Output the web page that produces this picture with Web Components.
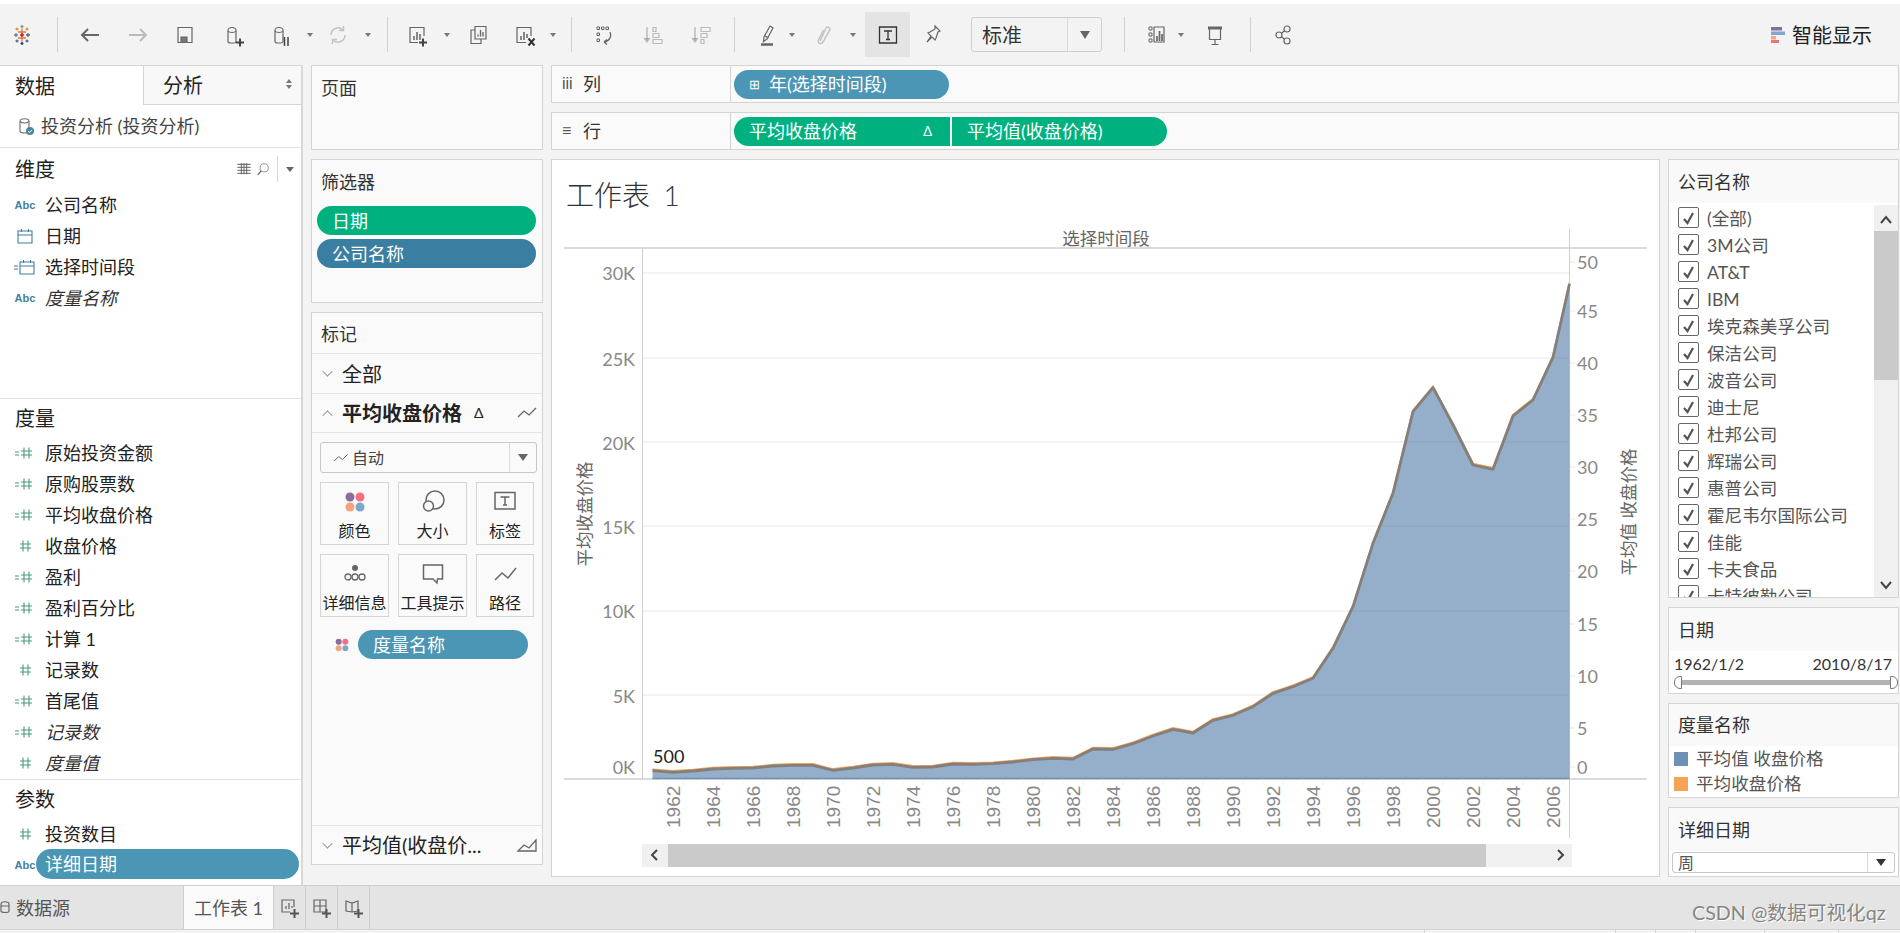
<!DOCTYPE html>
<html lang="zh">
<head>
<meta charset="utf-8">
<title>工作表 1</title>
<style>
html,body{margin:0;padding:0;height:933px;overflow:hidden;background:#f3f3f3;}
body{font-family:Lato,"Noto Sans CJK SC",sans-serif;color:#222;}
</style>
</head>
<body>
<tb-app>
  <tb-toolbar slot="top"></tb-toolbar>

  <tb-data-pane slot="data"></tb-data-pane>

  <div slot="mid" style="display:flex;flex-direction:column;gap:9px;height:800px">
    <tb-panel heading="页面" style="height:85px"></tb-panel>
    <tb-panel heading="筛选器" style="height:144px">
      <div style="display:flex;flex-direction:column;gap:4px;padding:13px 6px 0 5px">
        <tb-pill kind="green">日期</tb-pill>
        <tb-pill kind="dark">公司名称</tb-pill>
      </div>
    </tb-panel>
    <tb-marks></tb-marks>
  </div>

  <div slot="shelves" style="display:flex;flex-direction:column;gap:9px">
    <tb-shelf label="列" glyph="iii">
      <tb-pill kind="blue" style="width:215px"><span style="font-size:13px;margin-right:9px">⊞</span>年(选择时间段)</tb-pill>
    </tb-shelf>
    <tb-shelf label="行" glyph="≡">
      <tb-pill kind="green" shape="left" style="width:216px">平均收盘价格<span style="margin-left:auto;margin-right:18px;font-size:13px">Δ</span></tb-pill>
      <tb-pill kind="green" shape="right" style="width:215px;margin-left:2px">平均值(收盘价格)</tb-pill>
    </tb-shelf>
  </div>

  <tb-chart slot="center"></tb-chart>

  <div slot="right" style="display:flex;flex-direction:column;gap:9px">
    <tb-side heading="公司名称" style="height:439px">
      <tb-checklist>
        <tb-check>(全部)</tb-check><tb-check>3M公司</tb-check><tb-check>AT&amp;T</tb-check><tb-check>IBM</tb-check>
        <tb-check>埃克森美孚公司</tb-check><tb-check>保洁公司</tb-check><tb-check>波音公司</tb-check><tb-check>迪士尼</tb-check>
        <tb-check>杜邦公司</tb-check><tb-check>辉瑞公司</tb-check><tb-check>惠普公司</tb-check><tb-check>霍尼韦尔国际公司</tb-check>
        <tb-check>佳能</tb-check><tb-check>卡夫食品</tb-check><tb-check>卡特彼勒公司</tb-check>
      </tb-checklist>
    </tb-side>
    <tb-side heading="日期" style="height:87px"><tb-range from="1962/1/2" to="2010/8/17"></tb-range></tb-side>
    <tb-side heading="度量名称" style="height:95px;--head:42px">
      <tb-legend color="#6f90b5">平均值 收盘价格</tb-legend>
      <tb-legend color="#f5a356">平均收盘价格</tb-legend>
    </tb-side>
    <tb-side heading="详细日期" style="height:70px"><tb-select>周</tb-select></tb-side>
  </div>

  <tb-tabs slot="bottom"></tb-tabs>
</tb-app>

<script>
// icons are drawn on a 24x24 box, one unit is one pixel
const cyl = '<path d="M6 7.5c0-4 8-4 8 0v11c0 1-1 1.5-2 1.5H9c-2 0-3-.5-3-1.5z"/><path d="M6 8c1.500 2 6.500 2 8 0"/>';
const bars = '<path d="M9 17v-4M12 17V9M15 17v-6" stroke-width="1.5"/>';
const plus = '<path d="M14 19.500h8M18 15.500v8" stroke="#444" stroke-width="2"/>';
const icons = {
  logo: '<g stroke-width="1.300"><path d="M12 6v12M8 9h8M8 15h8" stroke="#e8762c"/><path d="M12 10v4M10 12h4" stroke="#c72037"/><path d="M6 10v4M4 12h4" stroke="#59879b"/><path d="M18 10v4M16 12h4" stroke="#5b6591"/><path d="M12 2v3.500M10.500 3.500h3" stroke="#7099a6"/><path d="M12 18.500v3.500M10.500 20.500h3" stroke="#1f457e"/><path d="M7 4.500v3M5.500 6h3M17 4.500v3M15.500 6h3" stroke="#eb912b"/><path d="M7 16.500v3M5.500 18h3M17 16.500v3M15.500 18h3" stroke="#5c6692"/></g>',
  back: '<path d="M21 12H4M10 6l-6 6 6 6" stroke-width="2"/>',
  forward: '<path d="M3 12h17M14 6l6 6-6 6" stroke="#bbb" stroke-width="2"/>',
  save: '<path d="M5 4.500h14v15H5z"/><path d="M8 19v-5h6v5" fill="#777"/>',
  newds: cyl + plus,
  pause: cyl + '<path d="M15.500 14v9M19 14v9" stroke="#444" stroke-width="1.500"/>',
  refresh: '<g stroke="#c4c4c4" stroke-width="1.500"><path d="M5 12a7 7 0 0 1 12-5"/><path d="M19 12a7 7 0 0 1-12 5"/><path d="M17.500 3v4.500H13M6.500 21v-4.500H11"/></g>',
  newsheet: '<path d="M19 13V4.500H5v15h8"/>' + bars + plus,
  dup: '<path d="M9 16V3.500h11V16z"/><path d="M9 7H5v13.500h10V16"/><path d="M12 13.500v-2M14.500 13.500V7M17 13.500V9" stroke-width="1.300"/>',
  clear: '<path d="M18 13V4.500H4v15h9"/><path d="M8 17v-4M11 17V9M14 15v-4" stroke-width="1.500"/><path d="M15.500 15.500l6 7M21.500 15.500l-6 7" stroke="#333" stroke-width="2"/>',
  swap: '<path d="M5 4h2.500v2.500H5zM9.500 4H12v2.500H9.500zM14 4h2.500v2.500H14zM5 10h2.500v2.500H5zM5 16h2.500v2.500H5z" stroke-width="1"/><path d="M18 9c2 4 0 9-6 10M12 19l3-2.500M12 19l3 2.500" stroke-width="1.300"/>',
  sort1: '<g stroke="#bbb"><path d="M7 4v14" stroke-width="1.500"/><path d="M4 15l3 4 3-4" fill="#aaa"/><path d="M13 4.500h3v4h-3zM13 10.500h6v4h-6zM13 16.500h9v4h-9z"/></g>',
  sort2: '<g stroke="#bbb"><path d="M7 4v14" stroke-width="1.500"/><path d="M4 15l3 4 3-4" fill="#aaa"/><path d="M13 4.500h9v4h-9zM13 10.500h6v4h-6zM13 16.500h3v4h-3z"/></g>',
  pen: '<path d="M15 3l3 2-6 11-3.500 2.500L9 14z"/><path d="M10 13l3.500 2M6 21.500h12" /><path d="M6 21.500h12" stroke="#666" stroke-width="2.500"/>',
  clip: '<path stroke="#c4c4c4" stroke-width="1.500" d="M9 18l6-13c1.500-2.500 5 0 3.500 2.500L12 19c-2 3-6 1-4.500-2l5-10"/>',
  text: '<path d="M3.500 4h17v16h-17z" stroke="#333" stroke-width="1.300"/><path d="M8 8h8M12 8v8M10 16.500h4" stroke="#333" stroke-width="1.300"/>',
  pin: '<path d="M14 3l5 5-2 1-2 6-1 2-3-3-5 5 4-6-3-3 2-1 5-3z"/>',
  showme: '<path d="M5 4h3v3H5zM5 10h3v3H5zM5 16h3v3H5z" stroke-width="1"/><path d="M10 4h10v15H10z"/><path d="M13 18v-5M15.500 18V8M18 18v-7" stroke-width="1.700"/>',
  present: '<path d="M5 5h14" stroke-width="3"/><path d="M6.500 6v10.500h11V6M12 16.500v5M8.500 21.500h7"/>',
  share: '<circle cx="8" cy="12" r="3"/><circle cx="16" cy="6" r="3"/><circle cx="16" cy="18" r="3"/><path d="M10.500 10.300l3-2.500M10.500 13.700l3 2.500"/>',
  cyl: '<path d="M7 7c0-3 9-3 9 0v10c0 2-2 2-4 2-3 0-5 0-5-2z" stroke="#777"/><path d="M7 7.500c2 2 7 2 9 0" stroke="#777"/><circle cx="17" cy="17" r="4" fill="#4a88a8" stroke="none"/><path d="M15 17l1.500 1.500 2.500-2.500" stroke="#fff" stroke-width="1"/>',
  line: '<path d="M3 16l6-6 5 4 7-7" stroke-width="1.300"/>',
  area: '<path d="M3 18l6-6 5 3 7-8v11H3z" stroke-width="1.300"/>',
  grid: '<path d="M2 5h20M2 9.500h20M2 14h20M2 18.500h20M8 3v17M12 3v17M16 3v17" stroke-width="1.500"/>',
  search: '<circle cx="14" cy="10" r="7"/><path d="M9 15L3 22" stroke-width="2"/>',
  color: '<circle cx="7" cy="7" r="4.500" fill="#8a6d9e" stroke="none"/><circle cx="17" cy="7" r="4.500" fill="#f76f7f" stroke="none"/><circle cx="7" cy="17" r="4.500" fill="#f3a581" stroke="none"/><circle cx="17" cy="17" r="4.500" fill="#7ea6cf" stroke="none"/>',
  size: '<circle cx="14" cy="10" r="9" stroke-width="1.500"/><circle cx="7.500" cy="16" r="5" fill="#fafafa" stroke-width="1.500"/>',
  label: '<path d="M2 2.500h20v16.500H2z" stroke-width="1.500"/><path d="M7.500 7h9M12 7v8M10 15h4" stroke-width="1.500"/>',
  detail: '<circle cx="12" cy="6" r="3" fill="#666" stroke="none"/><circle cx="5" cy="15" r="3" stroke-width="1.300"/><circle cx="12" cy="15" r="3" stroke-width="1.300"/><circle cx="19" cy="15" r="3" stroke-width="1.300"/>',
  tip: '<path d="M2.500 3h19v14h-5l-.5 4-4-4H2.500z" stroke-width="1.500"/>',
  path: '<path d="M2 18l7-7 6 5 8-10" stroke-width="1.500"/>',
  date: '<path d="M5 7h14v12H5zM5 11h14M8.500 5v3M15.500 5v3" stroke="#3f7f9f" stroke-width="1.100"/>',
  cdate: '<path d="M7 7h14v12H7zM7 11h14M10.500 5v3M17.500 5v3M1 11h4M1 14h4" stroke="#3f7f9f" stroke-width="1.100"/>',
  num: '<path d="M10 6.500v11M15 6.500v11M7 10h11M7 14h11" stroke="#4a9a7c" stroke-width="1.100"/>',
  cnum: '<path d="M8 6.500v11M13 6.500v11M5 10h11M5 14h11M-1 11h4M-1 14h4" stroke="#4a9a7c" stroke-width="1.100" transform="translate(3 0)"/>',
  sheetadd: '<path d="M16 11V4H4v12h8"/><path d="M8 13v-3M11 13V7M14 12v-2" stroke-width="1.200"/><path d="M12 17.500h9M16.500 13v9" stroke="#555" stroke-width="2"/>',
  dashadd: '<path d="M4 4h12v12H4zM4 10h12M10 4v12"/><path d="M12 17.500h9M16.500 13v9" stroke="#555" stroke-width="2"/>',
  storyadd: '<path d="M4 5l6 2 6-2v10l-6 1-6-1zM10 7v9"/><path d="M12 17.500h9M16.500 13v9" stroke="#555" stroke-width="2"/>',
  dsdb: '<path d="M0 9c0-3 8-3 8 0v7c0 2-8 2-8 0zM0 11h8" stroke="#666"/>'
};

// tiny helper: one class per element, markup in an open shadow root
function element(tag, css, render) {
  customElements.define(tag, class extends HTMLElement {
    constructor() {
      super();
      this.attachShadow({mode: 'open'});
    }
    connectedCallback() {
      this.shadowRoot.innerHTML = '<style>' + css + '</style>' + render(this);
    }
  });
}

element('tb-icon', ':host{display:inline-flex;width:24px;height:24px;flex:none}svg{display:block;overflow:visible}', el => {
  const s = el.getAttribute('size') || 24;
  return `<svg width="${s}" height="${s}" viewBox="0 0 24 24" fill="none" stroke="#666" stroke-width="1.200">${icons[el.getAttribute('name')]}</svg>`;
});

element('tb-app', `
  :host{display:block;width:1900px;height:933px;}
  .strip{height:4px;background:#fff}
  .main{display:grid;grid-template-columns:303px 232px 1109px 231px;grid-template-rows:85px 1fr;gap:9px 8px;height:820px}
  .data{grid-row:1/3;grid-column:1}
  .mid{grid-row:1/3;grid-column:2}
  .shelves{grid-row:1;grid-column:3/5}
  .center{grid-row:2;grid-column:3}
  .right{grid-row:2;grid-column:4}
`, () => `
  <div class="strip"></div>
  <slot name="top"></slot>
  <div class="main">
    <div class="data"><slot name="data"></slot></div>
    <div class="mid"><slot name="mid"></slot></div>
    <div class="shelves"><slot name="shelves"></slot></div>
    <div class="center"><slot name="center"></slot></div>
    <div class="right"><slot name="right"></slot></div>
  </div>
  <slot name="bottom"></slot>
`);

// [center x, icon] ; arrow = small caret, sep = divider line
const tools = [[22,'logo'],[57.500,'sep'],[90,'back'],[138,'forward'],[185,'save'],[234,'newds'],[281,'pause'],[310,'arrow'],[338,'refresh'],[368,'arrow'],
  [387,'sep'],[417,'newsheet'],[447,'arrow'],[478,'dup'],[525,'clear'],[553,'arrow'],[571,'sep'],[604,'swap'],[652,'sort1'],[700,'sort2'],[734,'sep'],
  [767,'pen'],[792,'arrow'],[823,'clip'],[853,'arrow'],[887.500,'text'],[933,'pin']];
const tools2 = [[1124,'sep'],[1156,'showme'],[1181,'arrow'],[1215,'present'],[1250,'sep'],[1283,'share']];

function toolRow(list, start) {
  let x = start, out = '';
  for (const [c, n] of list) {
    const w = n == 'sep' ? 1 : n == 'arrow' ? 6 : n == 'text' ? 45 : 24;
    const m = c - w / 2 - x;
    x = c + w / 2;
    if (n == 'sep') out += `<i class="sep" style="margin-left:${m}px"></i>`;
    else if (n == 'arrow') out += `<i class="arrow" style="margin-left:${m}px"></i>`;
    else if (n == 'text') out += `<span class="active" style="margin-left:${m}px"><tb-icon name="text"></tb-icon></span>`;
    else out += `<tb-icon name="${n}" style="margin-left:${m}px"></tb-icon>`;
  }
  return out;
}

element('tb-toolbar', `
  :host{display:flex;align-items:center;height:61px;background:#f3f3f3;position:relative}
  .sep{width:1px;height:35px;background:#d2d2d2;flex:none}
  .arrow{width:0;height:0;border:3px solid transparent;border-top:4px solid #777;border-bottom:0;flex:none}
  .active{width:45px;height:45px;background:#e4e4e4;display:flex;align-items:center;justify-content:center;flex:none}
  .select{margin-left:26px;width:129px;height:33px;border:1px solid #cfcfcf;border-radius:3px;display:flex;align-items:center;flex:none;box-sizing:content-box}
  .select b{font-weight:400;font-size:20px;line-height:24px;flex:1;padding-left:10px;color:#333}
  .select i{width:33px;height:33px;border-left:1px solid #d8d8d8;display:flex;align-items:center;justify-content:center}
  .select i::after{content:"";border:5px solid transparent;border-top:8px solid #666;border-bottom:0}
  .smart{margin-left:auto;margin-right:28px;display:flex;align-items:center;gap:7px;font-size:20px;line-height:24px;color:#222}
  .smart svg{display:block}
`, () => `
  ${toolRow(tools, 0)}
  <div class="select"><b>标准</b><i></i></div>
  ${toolRow(tools2, 1102)}
  <div class="smart">
    <svg width="14" height="16"><rect x="0" y="0" width="11" height="3.500" fill="#8a6d9e"/><rect x="0" y="4.500" width="14" height="3.500" fill="#7ea6cf"/><rect x="0" y="9" width="5" height="3.500" fill="#f3a581"/><rect x="0" y="13" width="8" height="3.500" fill="#f76f7f"/></svg>
    <span>智能显示</span>
  </div>
`);

element('tb-field', `
  :host{display:flex;align-items:center;height:var(--row,30.800px);padding-left:13px;font-size:18px;line-height:24px;color:#222;box-sizing:border-box}
  :host([italic]) span.t{font-style:italic;color:#333}
  .ic{width:24px;height:24px;margin-right:8px;display:flex;align-items:center;justify-content:center;flex:none}
  .abc{font:700 11px "Liberation Sans",sans-serif;color:#3f7f9f}
`, el => {
  const t = el.getAttribute('type');
  const ic = t == 'abc' ? '<span class="abc">Abc</span>' : `<tb-icon name="${t}"></tb-icon>`;
  return `<span class="ic">${ic}</span><span class="t"><slot></slot></span>`;
});

element('tb-data-pane', `
  :host{display:flex;flex-direction:column;background:#fff;border-top:1px solid #d4d4d4;border-right:2px solid #d8d8d8;height:820px;box-sizing:border-box;font-size:20px;--row:31.100px}
  .tabs{display:flex;height:39px;flex:none}
  .tabs div{display:flex;align-items:center;font-size:20px;line-height:24px;color:#222}
  .t1{width:143px;padding-left:15px;box-sizing:border-box}
  .t2{flex:1;padding-left:19px;background:#f8f8f8;border-left:1px solid #d4d4d4;border-bottom:1px solid #d4d4d4;position:relative}
  .t2::before,.t2::after{content:"";position:absolute;right:9px;border:3px solid transparent}
  .t2::before{top:13px;border-bottom:4px solid #777;border-top:0}
  .t2::after{top:19px;border-top:4px solid #777;border-bottom:0}
  .src{height:43px;flex:none;display:flex;align-items:center;padding-left:13px;gap:4px;font-size:18px;line-height:22px;color:#444;border-bottom:1px solid #e2e2e2;box-sizing:border-box}
  .head{height:42px;flex:none;display:flex;align-items:center;padding-left:15px;font-size:20px;line-height:24px;box-sizing:border-box}
  .tools{margin-left:auto;display:flex;align-items:center;padding-right:7px}
  .tools tb-icon{width:16px;height:16px;margin-right:4px}
  .tools tb-icon+tb-icon{width:14px;height:14px;margin-right:7px}
  .tools i{width:1px;height:26px;background:#d8d8d8;margin-right:8px}
  .tools b{border:4px solid transparent;border-top:5px solid #666;border-bottom:0}
  .sec{display:flex;flex-direction:column}
  .dims{height:251px;border-bottom:1px solid #e2e2e2;box-sizing:border-box;--row:30.800px}
  .meas{height:381px;border-bottom:1px solid #e2e2e2;box-sizing:border-box}
  .h2{height:38px}
  .pill{position:relative}
  .pill tb-pill{position:absolute;left:36px;top:0;width:263px;height:30px;padding-left:9px}
`, () => `
  <div class="tabs"><div class="t1">数据</div><div class="t2">分析</div></div>
  <div class="src"><tb-icon name="cyl"></tb-icon><span>投资分析 (投资分析)</span></div>
  <div class="sec dims">
    <div class="head">维度<span class="tools"><tb-icon name="grid" size="16"></tb-icon><tb-icon name="search" size="14"></tb-icon><i></i><b></b></span></div>
    <tb-field type="abc">公司名称</tb-field>
    <tb-field type="date">日期</tb-field>
    <tb-field type="cdate">选择时间段</tb-field>
    <tb-field type="abc" italic>度量名称</tb-field>
  </div>
  <div class="sec meas">
    <div class="head h2">度量</div>
    <tb-field type="cnum">原始投资金额</tb-field>
    <tb-field type="cnum">原购股票数</tb-field>
    <tb-field type="cnum">平均收盘价格</tb-field>
    <tb-field type="num">收盘价格</tb-field>
    <tb-field type="cnum">盈利</tb-field>
    <tb-field type="cnum">盈利百分比</tb-field>
    <tb-field type="cnum">计算 1</tb-field>
    <tb-field type="num">记录数</tb-field>
    <tb-field type="cnum">首尾值</tb-field>
    <tb-field type="cnum" italic>记录数</tb-field>
    <tb-field type="num" italic>度量值</tb-field>
  </div>
  <div class="sec">
    <div class="head h2">参数</div>
    <tb-field type="num">投资数目</tb-field>
    <div class="pill"><tb-field type="abc"></tb-field><tb-pill kind="blue">详细日期</tb-pill></div>
  </div>
`);

element('tb-panel', `
  :host{display:block;background:#fafafa;border:1px solid #d4d4d4;box-sizing:border-box}
  h3{margin:0;font-weight:400;font-size:18px;line-height:24px;color:#333;padding:10px 9px 0;height:33px;box-sizing:border-box}
`, el => `<h3>${el.getAttribute('heading')}</h3><slot></slot>`);

element('tb-pill', `
  :host{display:flex;align-items:center;height:29px;border-radius:15px;color:#fff;font-size:18px;line-height:22px;padding-left:15px;box-sizing:border-box;flex:none;background:#4b96b4}
  :host([kind=green]){background:#00b180}
  :host([kind=dark]){background:#3a7ea1}
  :host([shape=left]){border-radius:15px 0 0 15px}
  :host([shape=right]){border-radius:0 15px 15px 0}
`, () => '<slot></slot>');

element('tb-shelf', `
  :host{display:flex;height:38px;background:#fafafa;border:1px solid #d4d4d4;box-sizing:border-box}
  .lab{width:179px;flex:none;border-right:1px solid #d4d4d4;display:flex;align-items:center;padding-left:10px;box-sizing:border-box;font-size:18px;line-height:24px;color:#333}
  .g{width:21px;font-size:16px;color:#555;font-family:"Liberation Sans",sans-serif}
  .pills{display:flex;align-items:center;padding-left:3px}
`, el => `
  <div class="lab"><span class="g">${el.getAttribute('glyph')}</span>${el.getAttribute('label')}</div>
  <div class="pills"><slot></slot></div>
`);

function card(name, text) {
  return `<div class="card"><tb-icon name="${name}"></tb-icon><span>${text}</span></div>`;
}

element('tb-marks', `
  :host{display:flex;flex-direction:column;height:553px;background:#fafafa;border:1px solid #d4d4d4;box-sizing:border-box}
  h3{margin:0;font-weight:400;font-size:18px;line-height:24px;color:#333;padding:9px 9px 0;height:41px;box-sizing:border-box;border-bottom:1px solid #e4e4e4;flex:none}
  .row{height:40px;flex:none;display:flex;align-items:center;border-bottom:1px solid #e4e4e4;box-sizing:border-box;font-size:20px;line-height:24px;padding-left:10px}
  .chev{width:9px;height:9px;border-left:1.500px solid #777;border-bottom:1.500px solid #777;transform:rotate(-45deg) scale(.8);margin:-4px 10px 0 1px;flex:none;box-sizing:border-box}
  .chev.up{transform:rotate(135deg) scale(.8);margin-top:4px}
  b{font-weight:700}
  .delta{font-size:14px;margin-left:12px}
  .row tb-icon{margin-left:auto;margin-right:3px}
  .drop{height:31px;margin:9px 5px 0 8px;border:1px solid #c8c8c8;border-radius:3px;display:flex;align-items:center;font-size:16px;line-height:20px;color:#444;padding-left:11px;box-sizing:border-box;flex:none;gap:2px}
  .drop i{margin-left:auto;width:26px;height:29px;border-left:1px solid #dcdcdc;display:flex;align-items:center;justify-content:center}
  .drop i::after{content:"";border:5px solid transparent;border-top:7px solid #666;border-bottom:0}
  .cards{display:grid;grid-template-columns:69px 69px 58px;column-gap:9px;row-gap:9px;margin:9px 0 0 8px}
  .card{height:63px;border:1px solid #d4d4d4;box-sizing:border-box;display:flex;flex-direction:column;align-items:center;padding-top:7px;font-size:16px;line-height:20px;color:#222;white-space:nowrap;gap:7px}
  .card span{display:block}
  .bub{display:flex;align-items:center;margin:13px 0 0 22px;gap:8px}
  .bub tb-pill{width:170px}
  .sp{flex:1}
  .end{border-top:1px solid #e4e4e4;border-bottom:0;height:39px}
`, () => `
  <h3>标记</h3>
  <div class="row"><span class="chev"></span>全部</div>
  <div class="row" style="height:39px"><span class="chev up"></span><b>平均收盘价格</b><span class="delta">Δ</span><tb-icon name="line"></tb-icon></div>
  <div class="drop"><tb-icon name="line" size="18" style="width:18px;height:18px"></tb-icon>自动<i></i></div>
  <div class="cards">
    ${card('color','颜色')}${card('size','大小')}${card('label','标签')}
    ${card('detail','详细信息')}${card('tip','工具提示')}${card('path','路径')}
  </div>
  <div class="bub"><tb-icon name="color" size="16" style="width:16px;height:16px"></tb-icon><tb-pill kind="blue">度量名称</tb-pill></div>
  <div class="sp"></div>
  <div class="row end"><span class="chev"></span>平均值(收盘价...<tb-icon name="area"></tb-icon></div>
`);

// points read off the plot: page x = 673 + 20 * (year - 1962)
const ys = [770.7,772.3,771,769,768.3,768,766,765.3,765.3,770.3,768,765,764.3,767.3,767,764,764.3,763.7,762,759.7,758.3,759,749,749.3,743.7,736,729.3,733,720.3,715.3,706.7,693.3,686.7,678.3,648.3,606.7,543.3,493.3,411.7,387.7,425,465,469.3,416,400,357.3];
function chartSvg() {
  const pts = ys.map((y, i) => [653 + 20 * i, y]);
  pts[0][0] = 652.5;
  pts.push([1569.5, 284]);
  const line = pts.map(p => p.join(',')).join(' ');
  const lineUp = pts.map(p => p[0] + ',' + (p[1] - 1.2)).join(' ');
  let s = '';
  // grid
  [273,358,442,526,611,695].forEach(y => { s += `<path d="M643 ${y}H1570" stroke="#efefef" stroke-width="1.500"/>`; });
  s += `<path d="M564 248H1647M564 779H1647" stroke="#cfcfcf" stroke-width="1.300"/>`;
  s += `<path d="M642.500 248V779M1569.500 228V838" stroke="#cfcfcf"/>`;
  // x ticks
  for (let i = 0; i < 46; i++) s += `<path d="M${663 + 20 * i} 779v6" stroke="#f0f0f0"/>`;
  // area
  s += `<polygon points="652.500,778.500 ${line} 1569.500,778.500" fill="rgb(78,121,167)" fill-opacity=".6"/>`;
  s += `<path d="M652.500 778.500H1569.500" stroke="#6f90b5" stroke-width="1.500"/>`;
  s += `<polyline points="${lineUp}" fill="none" stroke="#f5a356" stroke-width="2"/>`;
  s += `<polyline points="${line}" fill="none" stroke="#837f7d" stroke-width="2.800" stroke-linejoin="round"/>`;
  // left axis labels
  [['30K',273],['25K',359],['20K',443],['15K',527],['10K',611],['5K',696],['0K',767]].forEach(([t, y]) => {
    s += `<text x="635" y="${y}" text-anchor="end" dominant-baseline="central" class="ax">${t}</text>`;
  });
  [['50',262],['45',311],['40',363],['35',415],['30',467],['25',519],['20',571],['15',624],['10',676],['5',728],['0',767]].forEach(([t, y]) => {
    s += `<text x="1577" y="${y}" dominant-baseline="central" class="ax">${t}</text>`;
    s += `<path d="M1570 ${y}h5" stroke="#e8e8e8"/>`;
  });
  for (let yr = 1962; yr <= 2006; yr += 2) {
    const x = 680 + 20 * (yr - 1962);
    s += `<text transform="translate(${x} 828) rotate(-90)" class="yr">${yr}</text>`;
  }
  s += `<text x="1106" y="238" text-anchor="middle" dominant-baseline="central" class="cap">选择时间段</text>`;
  s += `<text transform="translate(584 514) rotate(-90)" text-anchor="middle" dominant-baseline="central" class="cap">平均收盘价格</text>`;
  s += `<text transform="translate(1628 512) rotate(-90)" text-anchor="middle" dominant-baseline="central" class="cap">平均值 收盘价格</text>`;
  s += `<text x="653" y="756" dominant-baseline="central" class="val">500</text>`;
  // scrollbar
  s += `<rect x="642" y="844" width="930" height="23" fill="#f0f0f0"/><rect x="668" y="844" width="818" height="23" fill="#cacaca"/>`;
  s += `<path d="M657 850l-5 5 5 5M1558 850l5 5-5 5" fill="none" stroke="#444" stroke-width="2"/>`;
  return s;
}

element('tb-chart', `
  :host{display:flex;flex-direction:column;height:718px;background:#fff;border:1px solid #d4d4d4;box-sizing:border-box}
  .title{height:69px;flex:none;display:flex;align-items:center;padding-left:14px;font-size:28px;line-height:34px;font-weight:300;color:#333;word-spacing:6px}
  svg{display:block}
  text{font-family:Lato,"Noto Sans CJK SC",sans-serif}
  .ax{font-size:18px;fill:#888}
  .yr{font:19px "Liberation Sans",sans-serif;fill:#888}
  .cap{font-size:17.500px;fill:#666}
  .val{font-size:18px;fill:#222}
`, () => `
  <div class="title">工作表 1</div>
  <svg width="1107" height="647" viewBox="552 229 1107 647">${chartSvg()}</svg>
`);

element('tb-side', `
  :host{display:flex;flex-direction:column;background:#fff;border:1px solid #d4d4d4;box-sizing:border-box;overflow:hidden}
  h3{margin:0;font-weight:400;font-size:18px;line-height:24px;color:#333;background:#f9f9f9;padding:0 0 0 9px;height:var(--head,43px);flex:none;display:flex;align-items:center;box-sizing:border-box}
`, el => `<h3>${el.getAttribute('heading')}</h3><slot></slot>`);

element('tb-checklist', `
  :host{display:flex;flex:1;min-height:0;position:relative;overflow:hidden}
  .list{flex:1;padding:1px 0 0 9px;overflow:hidden}
  .bar{width:24px;flex:none;margin-top:2px;background:#f0f0f0;position:relative}
  .thumb{position:absolute;left:0;right:0;top:26px;height:149px;background:#cacaca}
  svg{position:absolute;left:6px}
`, () => `
  <div class="list"><slot></slot></div>
  <div class="bar">
    <svg width="12" height="10" style="top:10px"><path d="M1 8l5-6 5 6" fill="none" stroke="#444" stroke-width="2"/></svg>
    <div class="thumb"></div>
    <svg width="12" height="10" style="bottom:7px"><path d="M1 2l5 6 5-6" fill="none" stroke="#444" stroke-width="2"/></svg>
  </div>
`);

element('tb-check', `
  :host{display:flex;align-items:center;height:27px;gap:8px;font-size:17.600px;line-height:24px;color:#555;white-space:nowrap}
  .box{width:21px;height:21px;border:1.500px solid #666;border-radius:2px;box-sizing:border-box;flex:none;display:flex;align-items:center;justify-content:center;background:#fff}
  .t{margin-top:2px}
`, () => `<span class="box"><svg width="13" height="14"><path d="M2 8l3.500 4L11 2" fill="none" stroke="#555" stroke-width="2.200"/></svg></span><span class="t"><slot></slot></span>`);

element('tb-range', `
  :host{display:block;padding:2px 6px 0 5px;font-size:16px;line-height:22px;color:#333}
  .v{display:flex;justify-content:space-between}
  .track{height:5px;background:#b3b3b3;margin:5px 0 0 4px;position:relative}
  .h{position:absolute;top:-4px;width:8px;height:13px;background:#fff;border:1px solid #777;box-sizing:border-box}
  .l{left:-4px;border-radius:6px 0 0 6px}
  .r{right:-6px;border-radius:0 6px 6px 0}
`, el => `
  <div class="v"><span>${el.getAttribute('from')}</span><span>${el.getAttribute('to')}</span></div>
  <div class="track"><span class="h l"></span><span class="h r"></span></div>
`);

element('tb-legend', `
  :host{display:flex;align-items:center;height:25px;padding-left:5px;gap:8px;font-size:17.600px;line-height:24px;color:#555;white-space:nowrap}
  i{width:14px;height:14px;flex:none}
`, el => `<i style="background:${el.getAttribute('color')}"></i><span><slot></slot></span>`);

element('tb-select', `
  :host{display:flex;align-items:center;height:21px;margin:1px 3px 0 3px;border:1px solid #c8c8c8;border-radius:3px;background:#fff;font-size:16px;line-height:20px;color:#555;padding-left:5px;box-sizing:border-box}
  i{margin-left:auto;width:26px;height:19px;border-left:1px solid #d8d8d8;display:flex;align-items:center;justify-content:center}
  i::after{content:"";border:5px solid transparent;border-top:7px solid #333;border-bottom:0}
`, () => `<span><slot></slot></span><i></i>`);

element('tb-tabs', `
  :host{display:block;position:relative;height:48px}
  .bar{display:flex;height:45px;background:#e4e4e4;border-top:1px solid #cfcfcf;border-bottom:1px solid #d2d2d2;box-sizing:border-box}
  .src{width:184px;display:flex;align-items:center;padding-left:1px;gap:2px;font-size:18px;line-height:24px;color:#555;box-sizing:border-box;border-right:1px solid #cfcfcf;flex:none}
  .src tb-icon{width:13px;margin-top:-1px}
  .sheet{width:90px;flex:none;background:#fafafa;border-right:1px solid #cfcfcf;display:flex;align-items:center;justify-content:center;font-size:18px;line-height:24px;color:#555;box-sizing:border-box}
  .add{width:32px;flex:none;border-right:1px solid #cfcfcf;display:flex;align-items:center;justify-content:center;box-sizing:border-box}
  .mark{position:absolute;left:1692px;top:16px;font-size:19.700px;line-height:24px;color:#858585;text-shadow:1px 1px 0 #fff;white-space:nowrap}
  .status{display:flex;height:3px;background:#f3f3f3}
  .status i{border-left:1px solid #d2d2d2}
`, () => `
  <div class="bar">
    <div class="src"><tb-icon name="dsdb"></tb-icon><span>数据源</span></div>
    <div class="sheet">工作表 1</div>
    <div class="add"><tb-icon name="sheetadd"></tb-icon></div>
    <div class="add"><tb-icon name="dashadd"></tb-icon></div>
    <div class="add"><tb-icon name="storyadd"></tb-icon></div>
  </div>
  <div class="status">
    <i style="margin-left:1424px;width:190px"></i><i style="width:39px"></i><i style="width:39px"></i><i style="width:68px"></i><i style="width:73px"></i><i></i>
  </div>
  <div class="mark">CSDN @数据可视化qz</div>
`);
</script>
</body>
</html>
